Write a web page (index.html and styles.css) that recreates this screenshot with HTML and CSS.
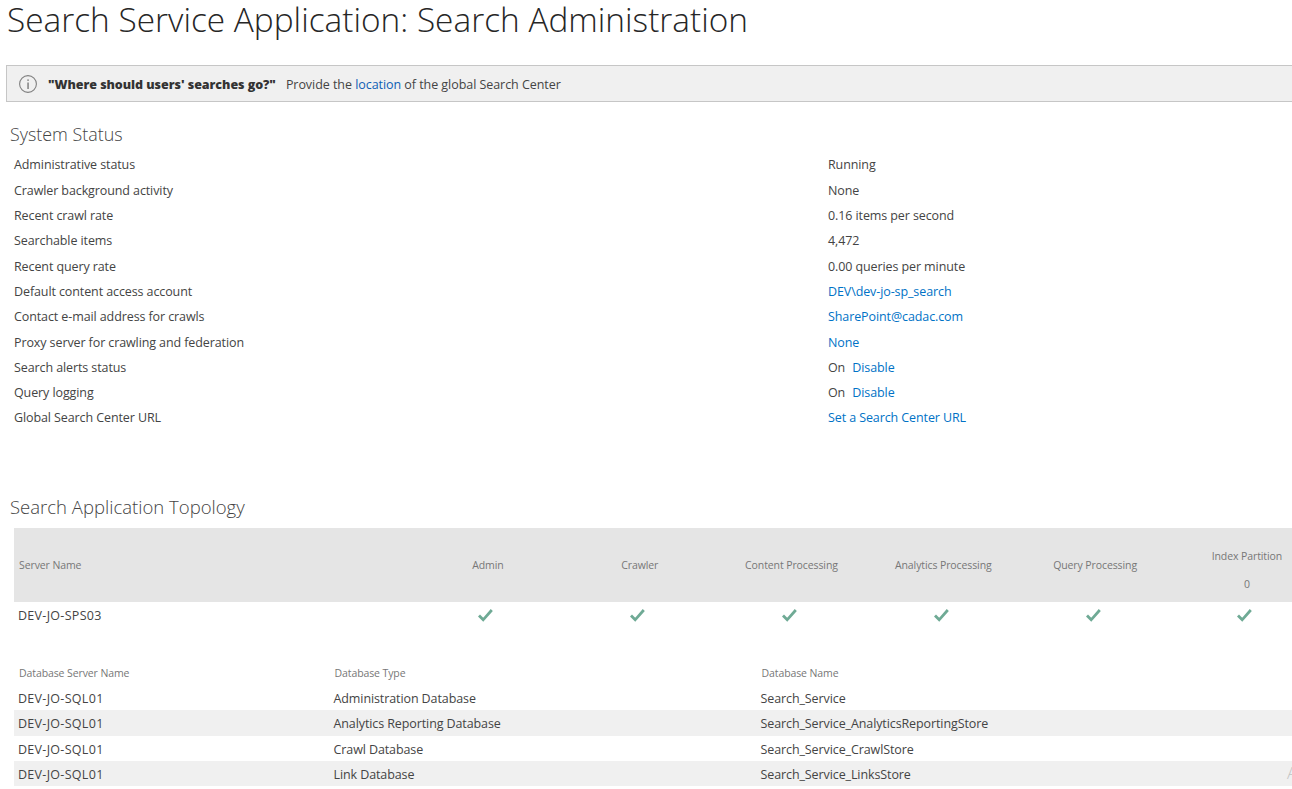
FILE: index.html
```html
<!DOCTYPE html>
<html lang="en">
<head>
<meta charset="utf-8">
<title>Search Administration</title>
<link rel="stylesheet" href="styles.css">
</head>
<body>
<h1 class="title">Search Service Application: Search Administration</h1>
<div class="banner">
  <svg class="info" width="20" height="20" viewBox="0 0 20 20" aria-hidden="true"><circle cx="10" cy="10" r="8.4" fill="none" stroke="#808080" stroke-width="1.1"/><rect x="9.4" y="8.5" width="1.3" height="6.5" fill="#707070"/><rect x="9.4" y="5.4" width="1.3" height="1.5" fill="#707070"/></svg>
  <strong class="question">"Where should users' searches go?"</strong>
  <span class="hint">Provide the <a href="#">location</a> of the global Search Center</span>
</div>
<h2 class="section status-head">System Status</h2>
<div class="status">
  <div class="srow"><span>Administrative status</span><span>Running</span></div>
  <div class="srow"><span>Crawler background activity</span><span>None</span></div>
  <div class="srow"><span>Recent crawl rate</span><span>0.16 items per second</span></div>
  <div class="srow"><span>Searchable items</span><span>4,472</span></div>
  <div class="srow"><span>Recent query rate</span><span>0.00 queries per minute</span></div>
  <div class="srow"><span>Default content access account</span><a href="#">DEV\dev-jo-sp_search</a></div>
  <div class="srow"><span>Contact e-mail address for crawls</span><a href="#">SharePoint@cadac.com</a></div>
  <div class="srow"><span>Proxy server for crawling and federation</span><a href="#">None</a></div>
  <div class="srow"><span>Search alerts status</span><span>On <a class="act" href="#">Disable</a></span></div>
  <div class="srow"><span>Query logging</span><span>On <a class="act" href="#">Disable</a></span></div>
  <div class="srow"><span>Global Search Center URL</span><a href="#">Set a Search Center URL</a></div>
</div>
<h2 class="section topo-head">Search Application Topology</h2>
<div class="topo">
  <div class="thead">
    <div class="tname">Server Name</div>
    <div class="tc">Admin</div>
    <div class="tc">Crawler</div>
    <div class="tc">Content Processing</div>
    <div class="tc">Analytics Processing</div>
    <div class="tc">Query Processing</div>
    <div class="tc tstack"><span>Index Partition</span><span>0</span></div>
  </div>
  <div class="tbody">
    <div class="bname srv">DEV-JO-SPS03</div>
    <div class="ck"><svg class="check" viewBox="0 0 15 13"><path d="M1 6.5 5.2 10.8 13.8 1"/></svg></div>
    <div class="ck"><svg class="check" viewBox="0 0 15 13"><path d="M1 6.5 5.2 10.8 13.8 1"/></svg></div>
    <div class="ck"><svg class="check" viewBox="0 0 15 13"><path d="M1 6.5 5.2 10.8 13.8 1"/></svg></div>
    <div class="ck"><svg class="check" viewBox="0 0 15 13"><path d="M1 6.5 5.2 10.8 13.8 1"/></svg></div>
    <div class="ck"><svg class="check" viewBox="0 0 15 13"><path d="M1 6.5 5.2 10.8 13.8 1"/></svg></div>
    <div class="ck"><svg class="check" viewBox="0 0 15 13"><path d="M1 6.5 5.2 10.8 13.8 1"/></svg></div>
  </div>
</div>
<div class="db">
  <div class="drow dhead"><span>Database Server Name</span><span>Database Type</span><span>Database Name</span></div>
  <div class="drow"><span class="srv">DEV-JO-SQL01</span><span>Administration Database</span><span>Search_Service</span></div>
  <div class="drow alt"><span class="srv">DEV-JO-SQL01</span><span>Analytics Reporting Database</span><span>Search_Service_AnalyticsReportingStore</span></div>
  <div class="drow"><span class="srv">DEV-JO-SQL01</span><span>Crawl Database</span><span>Search_Service_CrawlStore</span></div>
  <div class="drow alt"><span class="srv">DEV-JO-SQL01</span><span>Link Database</span><span>Search_Service_LinksStore</span><span class="clip">A</span></div>
</div>
</body>
</html>
```
FILE: styles.css
```css
* { box-sizing: border-box; }
html, body { margin: 0; padding: 0; }
body {
  width: 1292px;
  height: 789px;
  overflow: hidden;
  background: #fff;
  color: #444;
  font-family: "Open Sans", "Liberation Sans", sans-serif;
  font-size: 12.5px;
  letter-spacing: -0.1px;
}
a { color: #0072c6; text-decoration: none; }
.title {
  margin: 0 0 0 7px;
  height: 65px;
  font-size: 33.4px;
  line-height: 38px;
  font-weight: 300;
  color: #262626;
  letter-spacing: 0;
  white-space: nowrap;
}
.banner {
  display: flex;
  align-items: center;
  margin-left: 6px;
  width: 1300px;
  height: 37px;
  background: #f0f0f0;
  border: 1px solid #c6c6c6;
  padding: 1px 0 0 11px;
}
.info { flex: none; margin-right: 10px; }
.question { font-weight: 800; color: #333; margin-right: 10px; letter-spacing: -0.05px; }
.hint { letter-spacing: -0.05px; }
.banner a { color: #0f5fb5; }
.section {
  margin: 0 0 0 10px;
  font-weight: 300;
  line-height: 24px;
  color: #444;
  letter-spacing: 0;
}
.status-head { margin-top: 20px; font-size: 17.9px; }
.status { margin: 6.45px 0 0 14px; }
.srow {
  display: grid;
  grid-template-columns: 814px 1fr;
  height: 25.3px;
  line-height: 25.3px;
  white-space: nowrap;
}
.act { margin-left: 4px; }
.topo-head { margin-top: 64.55px; font-size: 18.55px; }
.topo { margin: 9px 0 0 14px; width: 1340px; }
.thead, .tbody {
  display: grid;
  grid-template-columns: 398px repeat(6, 151.8px);
}
.thead {
  height: 74px;
  background: #e5e5e5;
  color: #777;
  font-size: 10.5px;
  align-items: center;
}
.tname { padding-left: 5px; }
.tc { text-align: center; }
.tstack { display: flex; flex-direction: column; gap: 14px; padding-top: 10px; color: #777; }
.tbody { height: 26px; align-items: center; }
.bname { padding-left: 4px; }
.srv { letter-spacing: 0.3px; }
.ck { display: flex; justify-content: center; padding-right: 4px; }
.check { width: 15px; height: 13px; fill: none; stroke: #6faa95; stroke-width: 2.8; }
.db { margin: 33px 0 0 14px; width: 1290px; }
.drow {
  display: grid;
  grid-template-columns: 315.5px 427px 1fr;
  height: 25.3px;
  line-height: 27px;
  padding-left: 4px;
  white-space: nowrap;
  position: relative;
}
.dhead { color: #777; font-size: 10.5px; height: 23.7px; line-height: 25.3px; }
.dhead span { padding-left: 1px; }
.alt { background: #f0f0f0; }
.clip { position: absolute; right: 7px; top: -2px; color: #c4c4c4; font-size: 17px; font-weight: 300; }
```
